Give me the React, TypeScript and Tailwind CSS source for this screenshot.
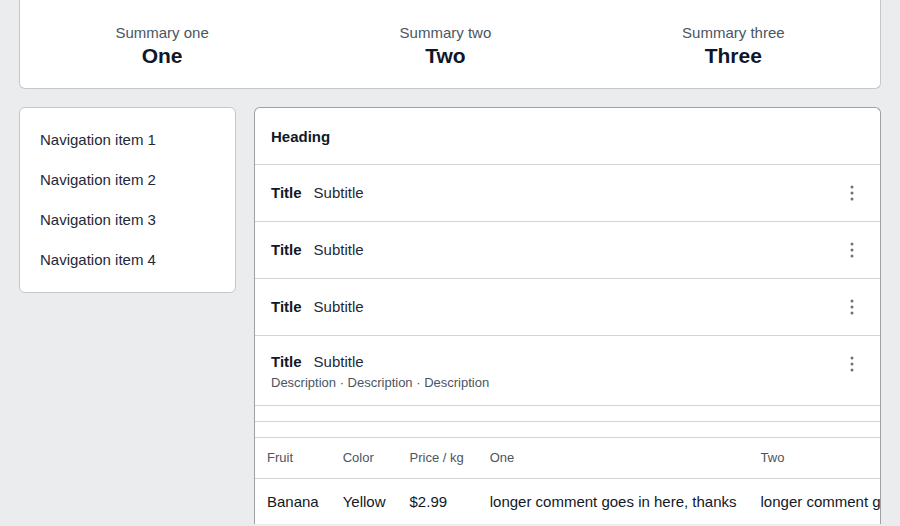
import React from "react";

const SUMMARY = [
  { label: "Summary one", value: "One" },
  { label: "Summary two", value: "Two" },
  { label: "Summary three", value: "Three" },
];

const NAV = ["Navigation item 1", "Navigation item 2", "Navigation item 3", "Navigation item 4"];

const ROWS = [
  { title: "Title", subtitle: "Subtitle" },
  { title: "Title", subtitle: "Subtitle" },
  { title: "Title", subtitle: "Subtitle" },
  {
    title: "Title",
    subtitle: "Subtitle",
    description: "Description · Description · Description",
  },
];

const FRUIT = [
  {
    fruit: "Banana",
    color: "Yellow",
    price: "$2.99",
    one: "longer comment goes in here, thanks",
    two: "longer comment goes in here, thanks",
  },
];

function Kebab() {
  return (
    <button
      type="button"
      className="mr-4 flex h-6 w-6 shrink-0 items-center justify-center rounded text-[#6b7280]"
    >
      <svg width="4" height="16" viewBox="0 0 4 16" fill="currentColor">
        <circle cx="2" cy="2" r="1.5" />
        <circle cx="2" cy="8" r="1.5" />
        <circle cx="2" cy="14" r="1.5" />
      </svg>
    </button>
  );
}

export default function App() {
  const cell = "px-3 text-left";
  const head = "px-3 text-left text-[13px] font-normal text-[#4b5563]";
  return (
    <div className="min-h-[526px] bg-[#ebecee] px-[19px] font-['Liberation_Sans',Arial,sans-serif] text-[#111827]">
      <div className="flex justify-around rounded-b-md border-x border-b border-[#c5c7cb] bg-white pb-5 pt-6">
        {SUMMARY.map((s) => (
          <div key={s.label} className="flex flex-col items-center">
            <span className="text-[15px] leading-[18px] text-[#4b5563]">{s.label}</span>
            <span className="mt-0.5 text-[21px] font-bold leading-6 text-[#0f172a]">{s.value}</span>
          </div>
        ))}
      </div>

      <div className="mt-[18px] flex items-start gap-[18px]">
        <nav className="w-[217px] shrink-0 rounded-md border border-[#c5c7cb] bg-white py-3">
          {NAV.map((n) => (
            <a key={n} className="flex h-10 items-center px-5 text-[15px] text-[#1f2937]">
              {n}
            </a>
          ))}
        </nav>

        <main className="min-w-0 flex-1 overflow-hidden rounded-t-md border-x border-t border-[#9ea0a5] bg-white">
          <div className="flex h-[57px] items-center border-b border-[#d1d3d7] px-4 pt-[3px] text-[15px] font-bold">
            Heading
          </div>
          {ROWS.map((r, i) =>
            r.description ? (
              <div
                key={i}
                className="flex items-start justify-between border-b border-[#d1d3d7] pb-[13px] pl-4 pt-4"
              >
                <div>
                  <div className="flex gap-3 text-[15px] leading-5">
                    <span className="font-bold">{r.title}</span>
                    <span className="text-[#1f2937]">{r.subtitle}</span>
                  </div>
                  <div className="mt-0.5 text-[13px] leading-[18px] text-[#4b5563]">{r.description}</div>
                </div>
                <Kebab />
              </div>
            ) : (
              <div key={i} className="flex h-[57px] items-center justify-between border-b border-[#d1d3d7] pl-4">
                <div className="flex gap-3 text-[15px] leading-5">
                  <span className="font-bold">{r.title}</span>
                  <span className="text-[#1f2937]">{r.subtitle}</span>
                </div>
                <Kebab />
              </div>
            ),
          )}
          <div className="h-4 border-b border-[#d1d3d7]" />
          <div className="mt-[15px] overflow-hidden border-t border-[#d1d3d7]">
            <table className="whitespace-nowrap">
              <thead>
                <tr className="h-10 border-b border-[#d1d3d7]">
                  <th className={head}>Fruit</th>
                  <th className={head}>Color</th>
                  <th className={`${head} pr-[14px]`}>Price / kg</th>
                  <th className={head}>One</th>
                  <th className={head}>Two</th>
                </tr>
              </thead>
              <tbody>
                {FRUIT.map((f) => (
                  <tr key={f.fruit} className="h-[46px] text-[15px] text-[#111827]">
                    <td className={`${cell} pt-0.5`}>{f.fruit}</td>
                    <td className={`${cell} pt-0.5`}>{f.color}</td>
                    <td className={`${cell} pt-0.5`}>{f.price}</td>
                    <td className={`${cell} pt-0.5`}>{f.one}</td>
                    <td className={`${cell} pt-0.5`}>{f.two}</td>
                  </tr>
                ))}
              </tbody>
            </table>
          </div>
        </main>
      </div>
    </div>
  );
}
